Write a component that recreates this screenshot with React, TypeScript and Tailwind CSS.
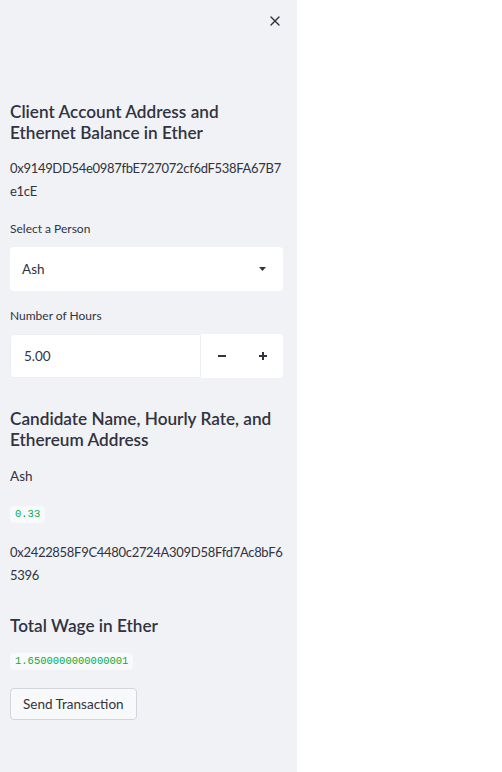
import { X } from "lucide-react";

const font = { fontFamily: "Lato, 'Noto Sans', sans-serif" };

function Heading({ lines, className = "" }: { lines: string[]; className?: string }) {
    return (
        <h3 className={`text-[17.2px] leading-[21px] font-semibold text-[#31333f] ${className}`}>
            {lines.map((l) => (
                <div key={l}>{l}</div>
            ))}
        </h3>
    );
}

function Address({ parts, className = "" }: { parts: string[]; className?: string }) {
    return (
        <div className={`text-[13px] tracking-[-0.3px] leading-[23px] text-[#31333f] ${className}`}>
            {parts.map((p) => (
                <div key={p}>{p}</div>
            ))}
        </div>
    );
}

function Code({ value, className = "" }: { value: string; className?: string }) {
    return (
        <div className={`self-start rounded-[4px] bg-[#f8f9fb] px-[5px] h-[17px] flex items-center ${className}`}>
            <code className="text-[10.5px] text-[#09ab3b]" style={{ fontFamily: "'Liberation Mono', monospace" }}>
                {value}
            </code>
        </div>
    );
}

export default function App() {
    return (
        <div className="flex min-h-[772px] bg-white" style={font}>
            {/* Sidebar */}
            <aside className="w-[297px] h-[772px] bg-[#f0f2f6] px-[10px] pt-[13px] flex flex-col">
                <div className="flex justify-end pr-[4px]">
                    <X className="w-[16px] h-[16px] text-[#31333f]" strokeWidth={2} />
                </div>

                <Heading className="mt-[72px]" lines={["Client Account Address and", "Ethernet Balance in Ether"]} />
                <Address className="mt-[14px]" parts={["0x9149DD54e0987fbE727072cf6dF538FA67B7", "e1cE"]} />

                <label className="mt-[18px] text-[12px] leading-[16px] text-[#31333f]">Select a Person</label>
                <div className="mt-[10px] h-[44px] w-[273px] rounded-[4px] bg-white flex items-center justify-between pl-[12px] pr-[17px]">
                    <span className="text-[13.5px] text-[#31333f]">Ash</span>
                    <svg width="7" height="4" viewBox="0 0 7 4">
                        <path d="M0 0h7L3.5 4z" fill="#31333f" />
                    </svg>
                </div>

                <label className="mt-[17px] text-[12px] leading-[16px] text-[#31333f]">Number of Hours</label>
                <div className="mt-[10px] h-[44px] w-[273px] rounded-[4px] bg-white flex">
                    <div className="w-[191px] h-full border border-[#eceef2] rounded-l-[4px] flex items-center pl-[13px]">
                        <span className="text-[13.5px] text-[#31333f]">5.00</span>
                    </div>
                    <div className="flex-1 flex items-center">
                        <div className="w-[41px] flex justify-center">
                            <svg width="8" height="2" viewBox="0 0 8 2">
                                <rect width="8" height="2" fill="#31333f" />
                            </svg>
                        </div>
                        <div className="w-[41px] flex justify-center">
                            <svg width="8" height="8" viewBox="0 0 8 8">
                                <rect x="3" width="2" height="8" fill="#31333f" />
                                <rect y="3" width="8" height="2" fill="#31333f" />
                            </svg>
                        </div>
                    </div>
                </div>

                <Heading className="mt-[30px]" lines={["Candidate Name, Hourly Rate, and", "Ethereum Address"]} />
                <div className="mt-[15px] text-[13.5px] leading-[23px] text-[#31333f]">Ash</div>
                <Code className="mt-[18px] h-[16px]" value="0.33" />
                <Address className="mt-[18px]" parts={["0x2422858F9C4480c2724A309D58Ffd7Ac8bF6", "5396"]} />

                <Heading className="mt-[28px]" lines={["Total Wage in Ether"]} />
                <Code className="mt-[17px]" value="1.6500000000000001" />

                <button className="mt-[18px] self-start h-[32px] px-[12px] rounded-[4px] border border-[#d3d5db] bg-[#f8f9fb] text-[13.5px] text-[#31333f]">
                    Send Transaction
                </button>
            </aside>
            <main className="flex-1 bg-white" />
        </div>
    );
}
